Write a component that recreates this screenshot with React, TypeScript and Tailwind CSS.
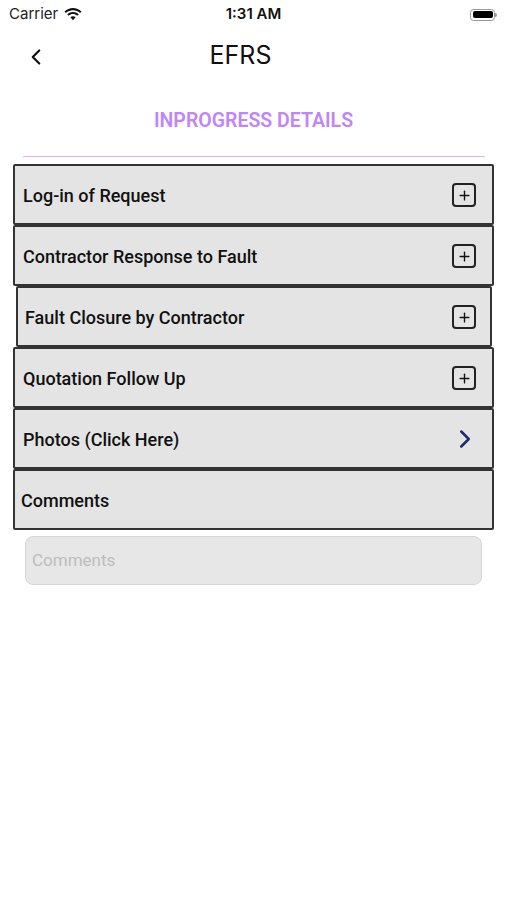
import { ChevronLeft, ChevronRight, Plus } from "lucide-react";

const rows = [
  { label: "Log-in of Request", kind: "plus", pad: "pl-[8px] pr-[16px]" },
  { label: "Contractor Response to Fault", kind: "plus", pad: "pl-[8px] pr-[16px]" },
  { label: "Fault Closure by Contractor", kind: "plus", pad: "ml-[3px] mr-[2px] pl-[7px] pr-[14px]" },
  { label: "Quotation Follow Up", kind: "plus", pad: "pl-[8px] pr-[16px]" },
  { label: "Photos (Click Here)", kind: "chevron", pad: "pl-[8px] pr-[16px]" },
  { label: "Comments", kind: "none", pad: "pl-[6px] pr-[16px]" },
];

function Wifi() {
  return (
    <svg width="18" height="13" viewBox="0 0 18 13" fill="#111">
      <path d="M9 2.2c2.7 0 5.2 1 7.1 2.8l1.4-1.5C15.2 1.3 12.2 0 9 0S2.8 1.3.5 3.5l1.4 1.5C3.8 3.2 6.3 2.2 9 2.2z" />
      <path d="M9 6.1c1.6 0 3.1.6 4.3 1.7l1.4-1.5C13.1 4.8 11.1 4 9 4S4.9 4.8 3.3 6.3l1.4 1.5C5.9 6.7 7.4 6.1 9 6.1z" />
      <path d="M9 8.3c-1 0-1.9.4-2.6 1L9 12.3l2.6-3c-.7-.6-1.6-1-2.6-1z" />
    </svg>
  );
}

export default function App() {
  return (
    <div className="w-[507px] h-[900px] bg-white font-['Roboto',sans-serif] text-[#111]">
      {/* status bar */}
      <div className="h-[28px] flex items-center justify-between px-[9px] pt-[1px]">
        <div className="flex items-center gap-[6px] w-[100px]">
          <span className="text-[15px] font-['Inter',sans-serif] text-[#222]">Carrier</span>
          <Wifi />
        </div>
        <span className="text-[15px] font-semibold font-['Inter',sans-serif]">1:31 AM</span>
        <div className="w-[100px] flex justify-end pr-[1px]">
          <div className="flex items-center">
            <div className="w-[25px] h-[12px] rounded-[3.5px] border border-[#999] p-[1.5px]">
              <div className="w-full h-full rounded-[2px] bg-black" />
            </div>
            <div className="w-[1.5px] h-[4px] bg-[#999] rounded-r-sm" />
          </div>
        </div>
      </div>

      {/* nav bar */}
      <div className="relative h-[55px] flex items-center justify-center">
        <ChevronLeft className="absolute left-[23px] top-[16px]" size={26} strokeWidth={2} color="#111" />
        <span className="text-[25px] font-['Inter',sans-serif] text-[#111] -ml-[26px]">EFRS</span>
      </div>

      {/* section title */}
      <div className="h-[73px] flex items-center justify-center pt-[3px]">
        <span className="text-[19.5px] font-semibold text-[#c084fc]">INPROGRESS DETAILS</span>
      </div>
      <div className="ml-[23px] mr-[22px] h-px bg-[#d8b4fe]" />

      <div className="mt-[7px] px-[13px]">
        {rows.map((r) => (
          <div
            key={r.label}
            className={`h-[61px] flex items-center justify-between bg-[#e4e4e4] border-2 border-[#333] rounded-[2px] pt-[1px] ${r.pad}`}
          >
            <span className="text-[18px] font-medium text-[#111]">{r.label}</span>
            {r.kind === "plus" && (
              <div className="w-[24px] h-[24px] rounded-[4px] border-2 border-[#222] flex items-center justify-center">
                <Plus size={15} strokeWidth={2.2} color="#111" />
              </div>
            )}
            {r.kind === "chevron" && (
              <ChevronRight className="mr-[-4px]" size={30} strokeWidth={2} color="#1e2a6e" />
            )}
          </div>
        ))}
      </div>

      <div className="mt-[6px] ml-[25px] w-[457px] h-[49px] rounded-[8px] bg-[#e7e7e7] border border-[#d6d6d6] flex items-center px-[6px]">
        <span className="text-[17px] text-[#bdbdbd]">Comments</span>
      </div>
    </div>
  );
}
